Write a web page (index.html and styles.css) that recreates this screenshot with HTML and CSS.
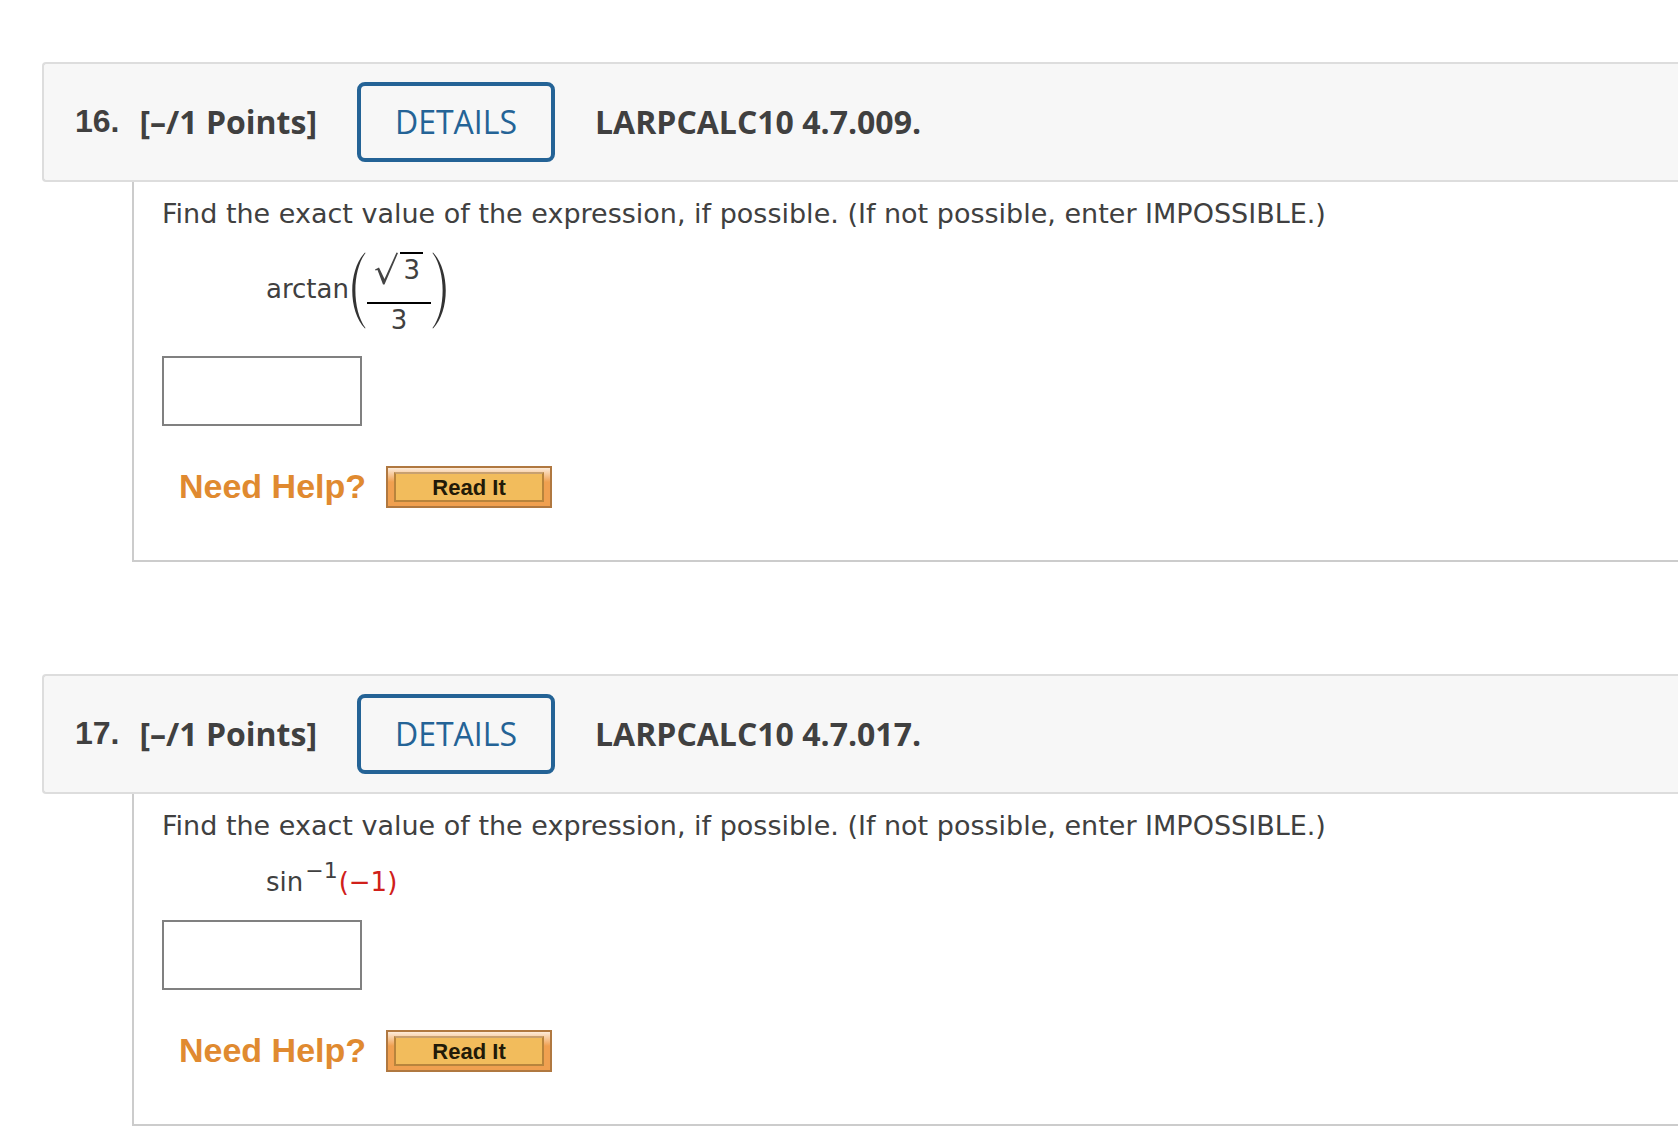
FILE: index.html
```html
<!DOCTYPE html>
<html lang="en">
<head>
<meta charset="utf-8">
<title>Assignment questions</title>
<link rel="stylesheet" href="styles.css">
</head>
<body>
<main class="questions">
  <section class="question">
    <header class="question-header">
      <span class="number">16.</span>
      <span class="points">[–/1 Points]</span>
      <button type="button" class="details">DETAILS</button>
      <h2 class="code">LARPCALC10 4.7.009.</h2>
    </header>
    <div class="question-body">
      <label class="prompt" for="answer-16">Find the exact value of the expression, if possible. (If not possible, enter IMPOSSIBLE.)</label>
      <div class="formula formula-tall">
        <span class="function">arctan</span>
        <svg class="paren" viewBox="0 0 18 78" aria-hidden="true"><path d="M16 0.500C-1 18-1 59 16 76.500L16.500 76C3 58 3 19 16.500 1Z"/></svg>
        <span class="fraction">
          <span class="numerator">
            <svg class="radical" viewBox="0 0 26 34" aria-hidden="true"><path d="M1 17.500L5 15.500L10.500 27L22.500 0.500L24 1L10.500 32.500H9L3.500 18L1.500 18.500Z"/></svg>
            <span class="radicand">3</span>
          </span>
          <span class="denominator">3</span>
        </span>
        <svg class="paren" viewBox="0 0 18 78" aria-hidden="true"><path d="M2 0.500C19 18 19 59 2 76.500L1.500 76C15 58 15 19 1.500 1Z"/></svg>
      </div>
      <input class="answer" id="answer-16" type="text">
      <div class="help">
        <span class="help-label">Need Help?</span>
        <button type="button" class="read-it"><span class="read-it-face">Read It</span></button>
      </div>
    </div>
  </section>

  <section class="question">
    <header class="question-header">
      <span class="number">17.</span>
      <span class="points">[–/1 Points]</span>
      <button type="button" class="details">DETAILS</button>
      <h2 class="code">LARPCALC10 4.7.017.</h2>
    </header>
    <div class="question-body">
      <label class="prompt" for="answer-17">Find the exact value of the expression, if possible. (If not possible, enter IMPOSSIBLE.)</label>
      <div class="formula formula-line">
        <span>sin<sup class="power">−1</sup><span class="value">(−1)</span></span>
      </div>
      <input class="answer" id="answer-17" type="text">
      <div class="help">
        <span class="help-label">Need Help?</span>
        <button type="button" class="read-it"><span class="read-it-face">Read It</span></button>
      </div>
    </div>
  </section>
</main>
</body>
</html>
```
FILE: styles.css
```css
* {
  box-sizing: border-box;
}

body {
  margin: 0;
  background: #fff;
  color: #404040;
  font: 26px/32px Verdana, "DejaVu Sans", sans-serif;
}

.questions {
  display: flex;
  flex-direction: column;
  gap: 112px;
  padding: 62px 0 16px 42px;
}

.question-header {
  display: flex;
  align-items: center;
  height: 120px;
  padding-left: 31px;
  border: 2px solid #ddd;
  border-right: 0;
  border-radius: 4px 0 0 4px;
  background: #f7f7f7;
  font: 700 32px/44px "Open Sans", sans-serif;
}

.number {
  padding-bottom: 2px;
  font-family: Arial, "Liberation Sans", sans-serif;
}

.points {
  margin-left: 20px;
}

.details {
  width: 198px;
  height: 80px;
  margin: 0 40px;
  padding: 0;
  border: 4px solid #246396;
  border-radius: 8px;
  background: transparent;
  color: #246396;
  font: 500 32px/44px "Open Sans", sans-serif;
}

.code {
  margin: 0;
  font: inherit;
}

.question-body {
  display: flex;
  flex-direction: column;
  align-items: flex-start;
  margin-left: 90px;
  padding: 16px 28px 52px;
  border: solid #ccc;
  border-width: 0 0 2px 2px;
}

.prompt {
  font-size: 27px;
}

.formula {
  display: flex;
  align-items: center;
  margin-left: 104px;
}

.formula-tall {
  margin-top: 22px;
  margin-bottom: 26px;
}

.formula-line {
  margin-top: 24px;
  margin-bottom: 22px;
}

.function {
  padding-bottom: 4px;
}

.paren {
  width: 18px;
  height: 78px;
  fill: #333;
}

.fraction {
  display: flex;
  flex-direction: column;
  width: 64px;
  text-align: center;
}

.numerator {
  display: flex;
  justify-content: flex-end;
  height: 52px;
  padding-right: 8px;
  border-bottom: 2px solid #000;
}

.radical {
  width: 26px;
  height: 34px;
  fill: #444;
}

.radicand {
  height: 32px;
  padding: 0 3px;
  border-top: 2px solid #000;
}

.denominator {
  height: 26px;
}

.power {
  padding: 0 1px 0 2px;
  font-size: 22px;
  line-height: 0;
  vertical-align: 13px;
}

.value {
  color: #d0201a;
}

.answer {
  width: 200px;
  height: 70px;
  padding: 0 12px;
  border: 2px solid #808080;
  background: #fff;
  color: inherit;
  font: inherit;
}

.help {
  display: flex;
  align-items: center;
  gap: 20px;
  margin: 40px 0 0 17px;
}

.help-label {
  padding-bottom: 2px;
  color: #e08a30;
  font: 700 34px/40px Arial, "Liberation Sans", sans-serif;
}

.read-it {
  display: flex;
  width: 166px;
  height: 42px;
  padding: 4px 6px;
  border: 2px solid #b07840;
  background: linear-gradient(#fdebd9, #f0a050 14px);
}

.read-it-face {
  flex: 1;
  border: 2px solid #b8843c;
  border-top-color: #c8a070;
  background: #f2bc5c;
  color: #221a08;
  font: 700 22px/28px Arial, "Liberation Sans", sans-serif;
}
```
